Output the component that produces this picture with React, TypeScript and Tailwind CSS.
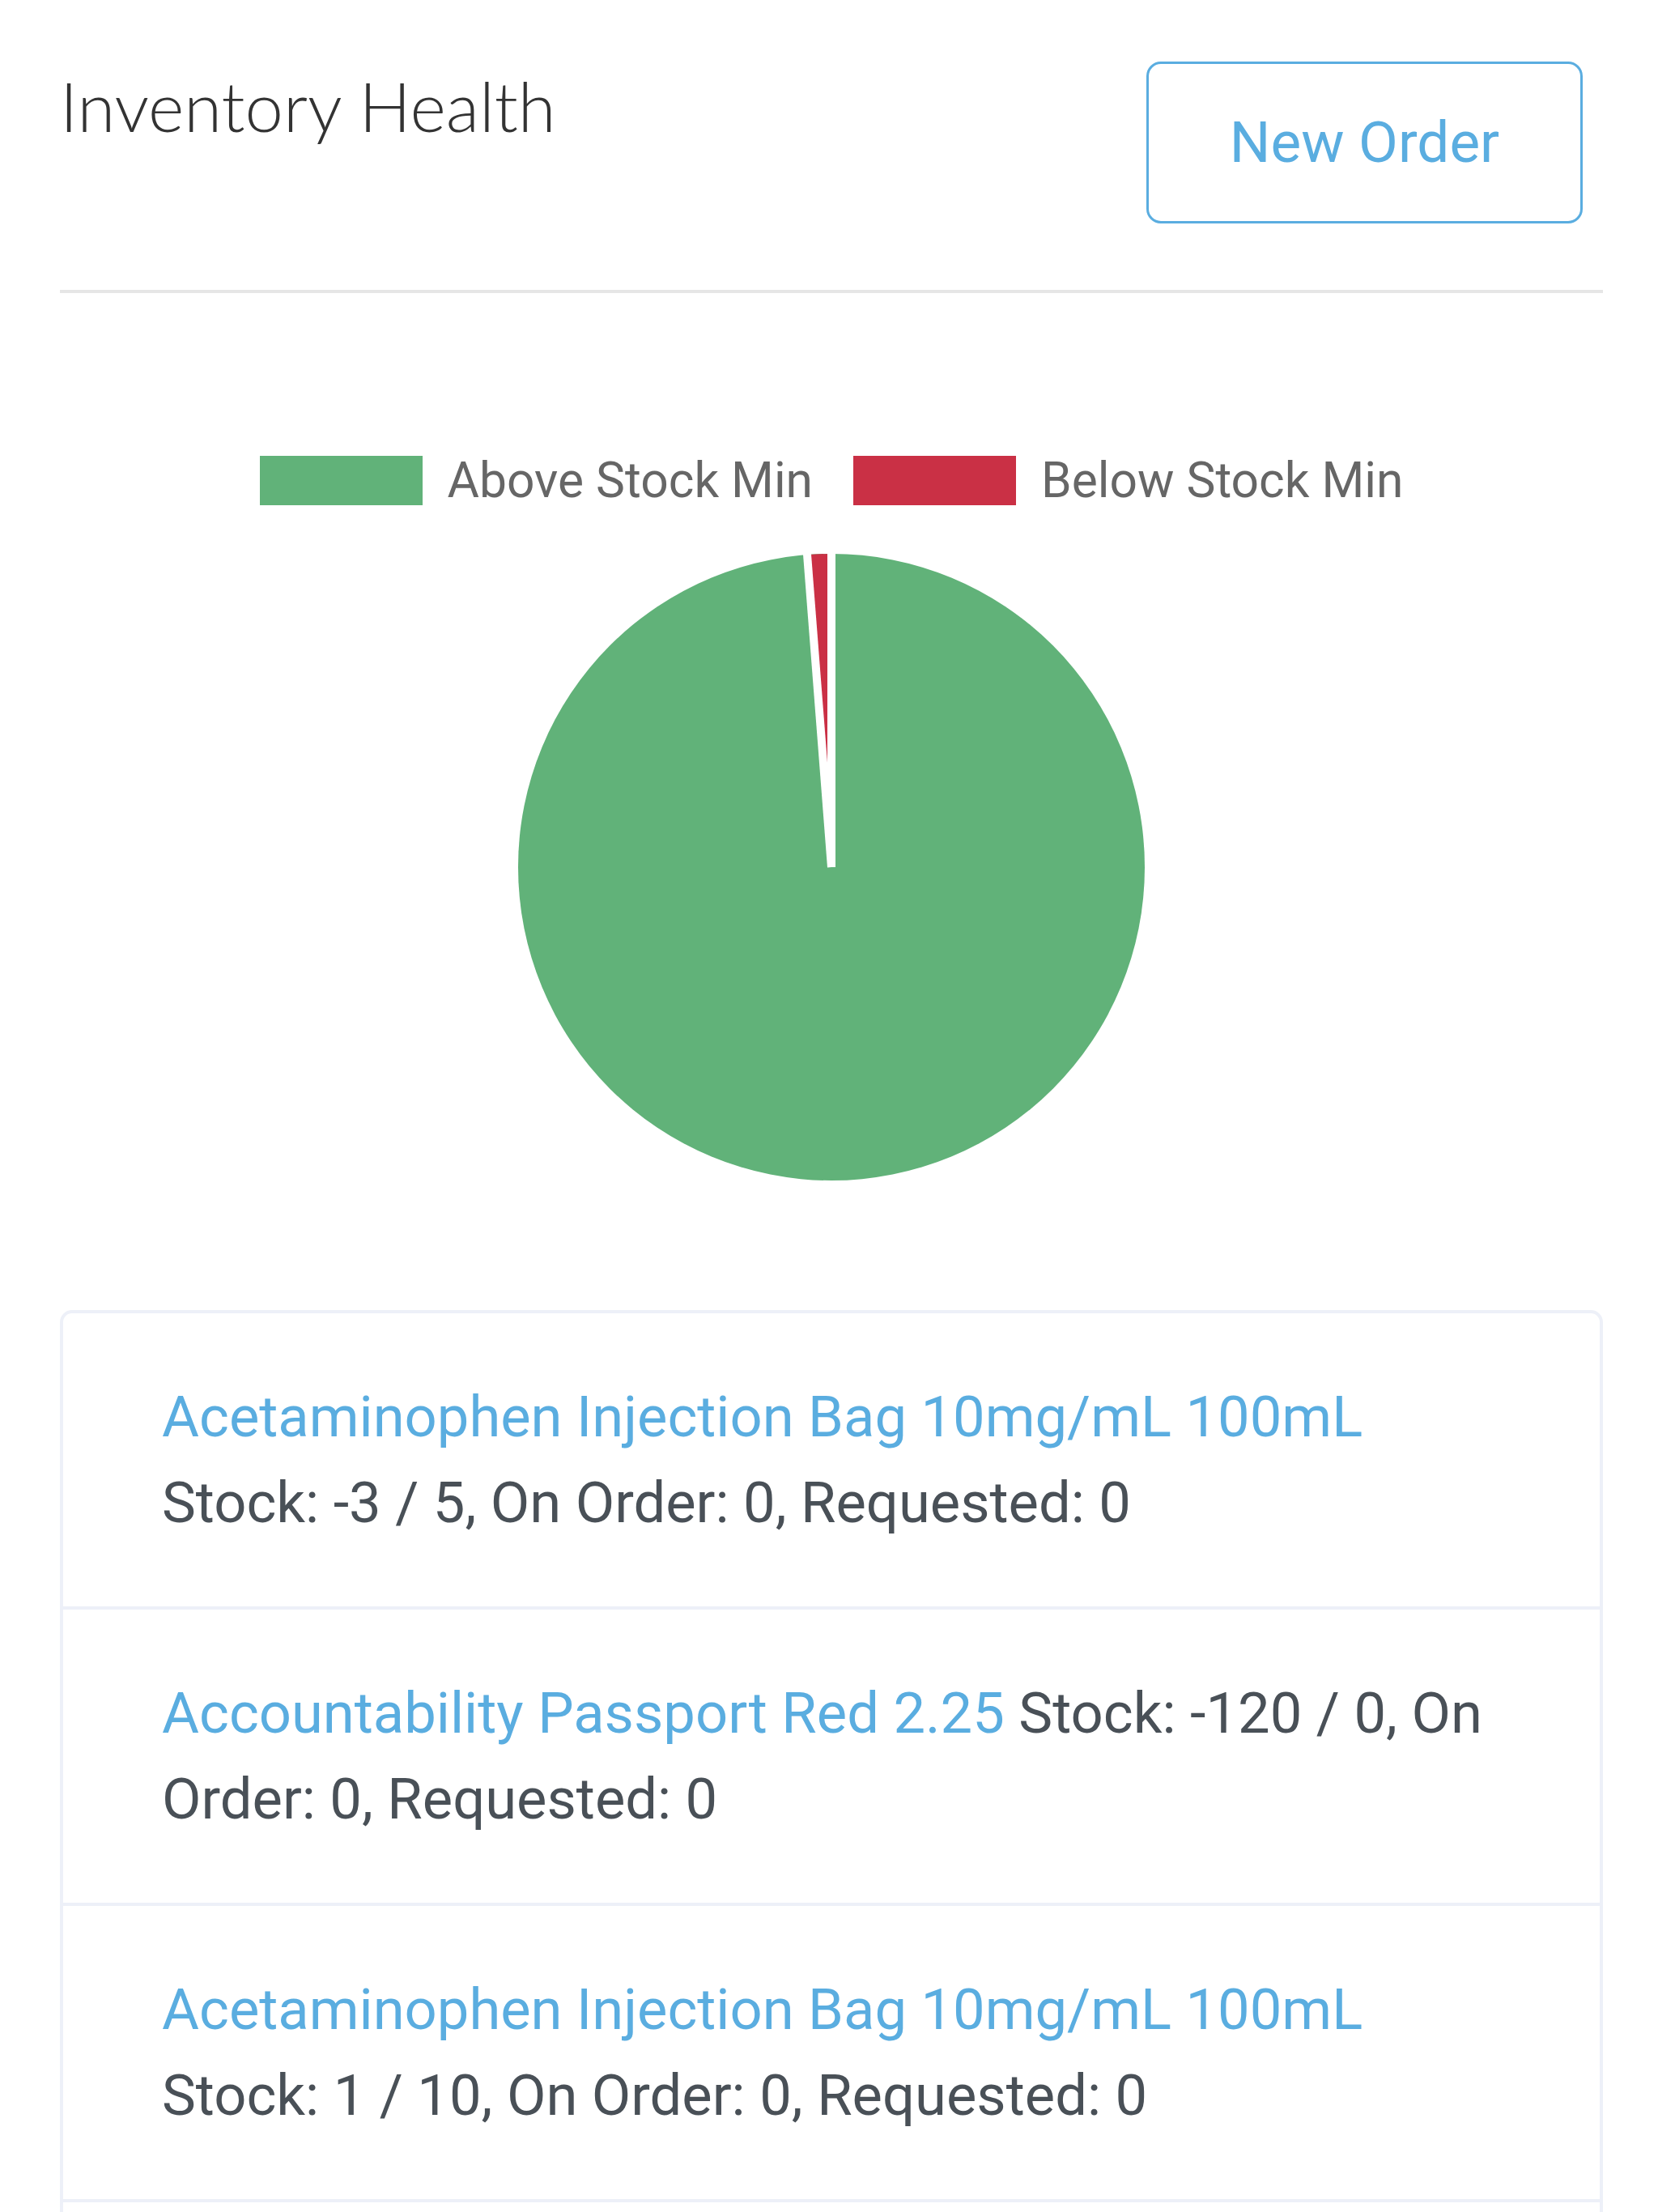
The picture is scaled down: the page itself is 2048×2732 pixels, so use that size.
import React from 'react';

const items = [
  { name: 'Acetaminophen Injection Bag 10mg/mL 100mL', stock: 'Stock: -3 / 5, On Order: 0, Requested: 0' },
  { name: 'Accountability Passport Red 2.25', stock: 'Stock: -120 / 0, On Order: 0, Requested: 0' },
  { name: 'Acetaminophen Injection Bag 10mg/mL 100mL', stock: 'Stock: 1 / 10, On Order: 0, Requested: 0' },
  { name: 'Accountability Passport Blue 2.25', stock: 'Stock: 2 / 20, On Order: 0, Requested: 0' },
];

function Pie() {
  // small "below" slice going counter-clockwise from 12 o'clock
  const r = 387;
  const c = 390;
  const a = (4.44 * Math.PI) / 180;
  const x = c - r * Math.sin(a);
  const y = c - r * Math.cos(a);
  return (
    <svg width="780" height="780" viewBox="0 0 780 780">
      <circle cx={c} cy={c} r={r} fill="#61b279" />
      <path d={`M ${c} ${c} L ${c} ${c - r} A ${r} ${r} 0 0 0 ${x} ${y} Z`} fill="#ca3045" />
      <line x1={c} y1={c} x2={c} y2={0} stroke="#fff" strokeWidth="10" />
      <line x1={c} y1={c} x2={c - (r + 3) * Math.sin(a)} y2={c - (r + 3) * Math.cos(a)} stroke="#fff" strokeWidth="10" />
    </svg>
  );
}

export default function App() {
  return (
    <div className="min-h-screen bg-white font-['Roboto',sans-serif]">
      <div className="pl-[74px] pr-[68px]">
        <header className="flex items-start justify-between pt-[76px]">
          <h1 className="mt-[4px] font-['Lato',sans-serif] text-[85px] font-light leading-[100px] text-[#333]">
            Inventory Health
          </h1>
          <button className="mr-[25px] flex h-[200px] w-[539px] items-center justify-center rounded-[18px] border-[3px] border-[#5aade0] text-[71px] text-[#5aade0]">
            New Order
          </button>
        </header>
        <div className="mt-[82px] h-[4px] bg-[#e6e6e6]" />

        <div className="mt-[201px] flex items-center justify-center">
          <div className="flex items-center gap-[31px]">
            <span className="h-[61px] w-[201px] bg-[#61b279]" />
            <span className="text-[60.5px] leading-[61px] text-[#666]">Above Stock Min</span>
          </div>
          <div className="ml-[50px] flex items-center gap-[31px]">
            <span className="h-[61px] w-[201px] bg-[#ca3045]" />
            <span className="text-[60.5px] leading-[61px] text-[#666]">Below Stock Min</span>
          </div>
        </div>

        <div className="mt-[57px] flex justify-center">
          <Pie />
        </div>

        <ul className="mt-[157px] overflow-hidden rounded-[15px] border-[4px] border-[#edf0f8] bg-white">
          {items.map((it, i) => (
            <li
              key={i}
              className="border-b-[4px] border-[#edf0f8] px-[122px] py-[75px] text-[70.5px] leading-[106px] text-[#495057]"
            >
              <a className="text-[#5aade0]">{it.name}</a> {it.stock}
            </li>
          ))}
        </ul>
      </div>
    </div>
  );
}
